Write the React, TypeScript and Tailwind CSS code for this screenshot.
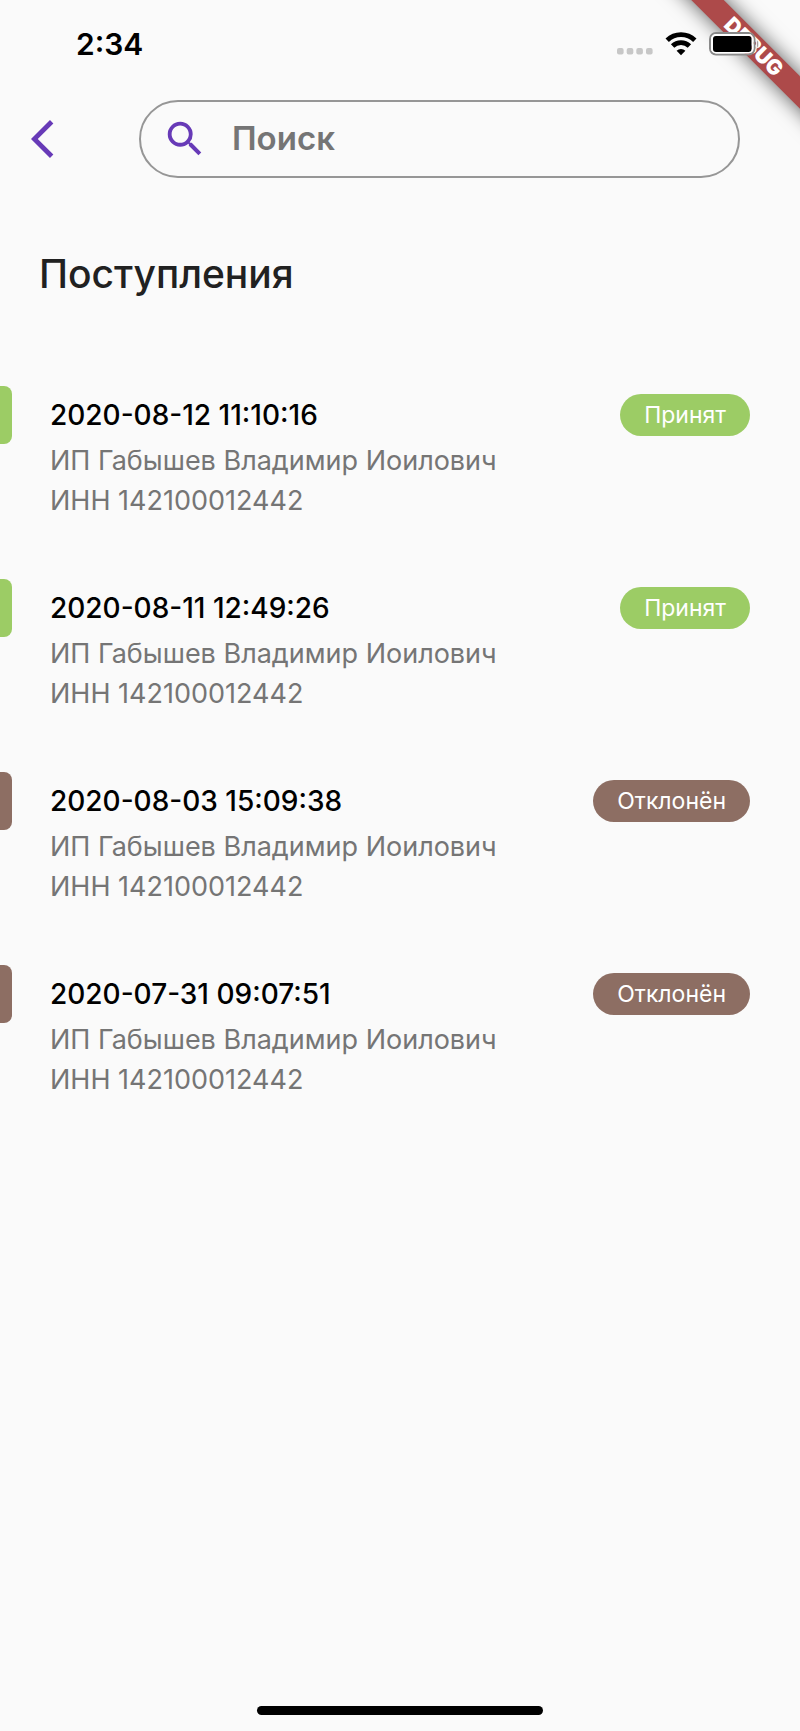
import React from "react";

type Status = "accepted" | "declined";

interface Receipt {
  date: string;
  name: string;
  inn: string;
  status: Status;
}

const receipts: Receipt[] = [
  { date: "2020-08-12 11:10:16", name: "ИП Габышев Владимир Иоилович", inn: "ИНН 142100012442", status: "accepted" },
  { date: "2020-08-11 12:49:26", name: "ИП Габышев Владимир Иоилович", inn: "ИНН 142100012442", status: "accepted" },
  { date: "2020-08-03 15:09:38", name: "ИП Габышев Владимир Иоилович", inn: "ИНН 142100012442", status: "declined" },
  { date: "2020-07-31 09:07:51", name: "ИП Габышев Владимир Иоилович", inn: "ИНН 142100012442", status: "declined" },
];

const statusLabel: Record<Status, string> = { accepted: "Принят", declined: "Отклонён" };
const statusColor: Record<Status, string> = { accepted: "bg-[#9ccc65]", declined: "bg-[#8d6e63]" };

function DebugBanner() {
  return (
    <div className="pointer-events-none absolute top-0 right-0 size-48 overflow-hidden">
      <div className="absolute top-[35px] -right-16 flex h-[23px] w-[220px] rotate-45 items-center justify-center bg-[#ad4a4a] text-[21px] font-black text-white shadow-[0_0_20px_rgba(0,0,0,0.65)]">
        DEBUG
      </div>
    </div>
  );
}

function StatusBar() {
  return (
    <div className="relative flex h-[88px] items-center justify-between pr-10 pl-[76px]">
      <span className="text-[30px] leading-9 font-semibold text-black">2:34</span>
      <div className="flex items-center">
        <svg className="h-7 w-9" viewBox="0 0 36 28" fill="#c7c7c7" aria-hidden="true">
          <rect x="0" y="18" width="6.6" height="6.6" rx="2" />
          <rect x="9.7" y="18" width="6.6" height="6.6" rx="2" />
          <rect x="19.3" y="18" width="6.6" height="6.6" rx="2" />
          <rect x="29" y="18" width="6.6" height="6.6" rx="2" />
        </svg>
        <svg className="ml-3 h-6 w-8" viewBox="0 0 32 24" aria-hidden="true">
          <g fill="none" stroke="#000" strokeWidth="4.8">
            <path d="M2.2 8.2a19.8 19.8 0 0 1 27.6 0" />
            <path d="M7.6 14a12 12 0 0 1 16.8 0" />
          </g>
          <path d="M11.6 18.8a6.4 6.4 0 0 1 8.8 0L16 23.2z" fill="#000" />
        </svg>
        <svg className="ml-3 h-6 w-[51px]" viewBox="0 0 51 24" aria-hidden="true">
          <rect x="1" y="1" width="44.5" height="21.5" rx="6" fill="none" stroke="#8a8a8a" strokeWidth="2" />
          <rect x="3" y="3" width="40.5" height="17.5" rx="4" fill="none" stroke="#fff" strokeWidth="2" />
          <rect x="4" y="4" width="38.5" height="16" rx="3" fill="#000" />
          <path d="M47.5 7.5c3 1.4 3 7.6 0 9z" fill="#a9a0a0" stroke="#fff" strokeWidth="0.8" />
        </svg>
      </div>
    </div>
  );
}

function SearchHeader() {
  return (
    <header className="mt-3 flex items-center pr-[60px] pl-[31px]">
      <button type="button" aria-label="Назад" className="mr-[62px] size-[46px] shrink-0">
        <svg className="size-full" viewBox="0 0 24 24" fill="#673ab7">
          <path d="M11.67 3.87L9.9 2.1 0 12l9.9 9.9 1.77-1.77L3.54 12z" />
        </svg>
      </button>
      <label className="flex h-[78px] min-w-0 flex-1 items-center rounded-full border-2 border-[#969696] pr-8 pl-[21px]">
        <svg className="size-[46px] shrink-0" viewBox="0 0 24 24" fill="#673ab7" aria-hidden="true">
          <path d="M15.5 14h-.79l-.28-.27A6.471 6.471 0 0 0 16 9.5 6.5 6.5 0 1 0 9.5 16c1.61 0 3.09-.59 4.23-1.57l.27.28v.79l5 4.99L20.49 19l-4.99-5zm-6 0C7.01 14 5 11.99 5 9.5S7.01 5 9.5 5 14 7.01 14 9.5 11.99 14 9.5 14z" />
        </svg>
        <input
          type="search"
          aria-label="Поиск"
          placeholder="Поиск"
          className="ml-6 min-w-0 flex-1 bg-transparent pb-[2px] text-[33px] leading-10 font-semibold text-black outline-none placeholder:text-[#757575]"
        />
      </label>
    </header>
  );
}

function ReceiptRow({ receipt }: { receipt: Receipt }) {
  return (
    <li className="flex items-start pr-[50px]">
      <span className={`h-[58px] w-3 shrink-0 rounded-r-lg ${statusColor[receipt.status]}`} />
      <div className="ml-[38px] min-w-0 flex-1 pt-2">
        <div className="flex h-[42px] items-center justify-between">
          <h2 className="text-[28px] leading-10 font-medium text-black">{receipt.date}</h2>
          <span className={`flex h-[42px] items-center rounded-full px-6 text-[23px] text-white ${statusColor[receipt.status]}`}>
            {statusLabel[receipt.status]}
          </span>
        </div>
        <div className="mt-[5px] text-[27px] leading-10 text-[#757575]">
          <p>{receipt.name}</p>
          <p>{receipt.inn}</p>
        </div>
      </div>
    </li>
  );
}

export default function App() {
  return (
    <div className="relative flex min-h-screen flex-col overflow-hidden bg-[#fafafa] font-['Inter','Noto_Sans',sans-serif]">
      <DebugBanner />
      <StatusBar />
      <SearchHeader />
      <main className="flex-1">
        <h1 className="mt-[72px] pl-[39px] text-[39px] leading-[48px] font-medium text-[#212121]">Поступления</h1>
        <ul className="mt-[88px] flex flex-col gap-[58px]">
          {receipts.map((receipt) => (
            <ReceiptRow key={receipt.date} receipt={receipt} />
          ))}
        </ul>
      </main>
      <div className="mx-auto mb-4 h-[9px] w-[286px] rounded-full bg-black" />
    </div>
  );
}
